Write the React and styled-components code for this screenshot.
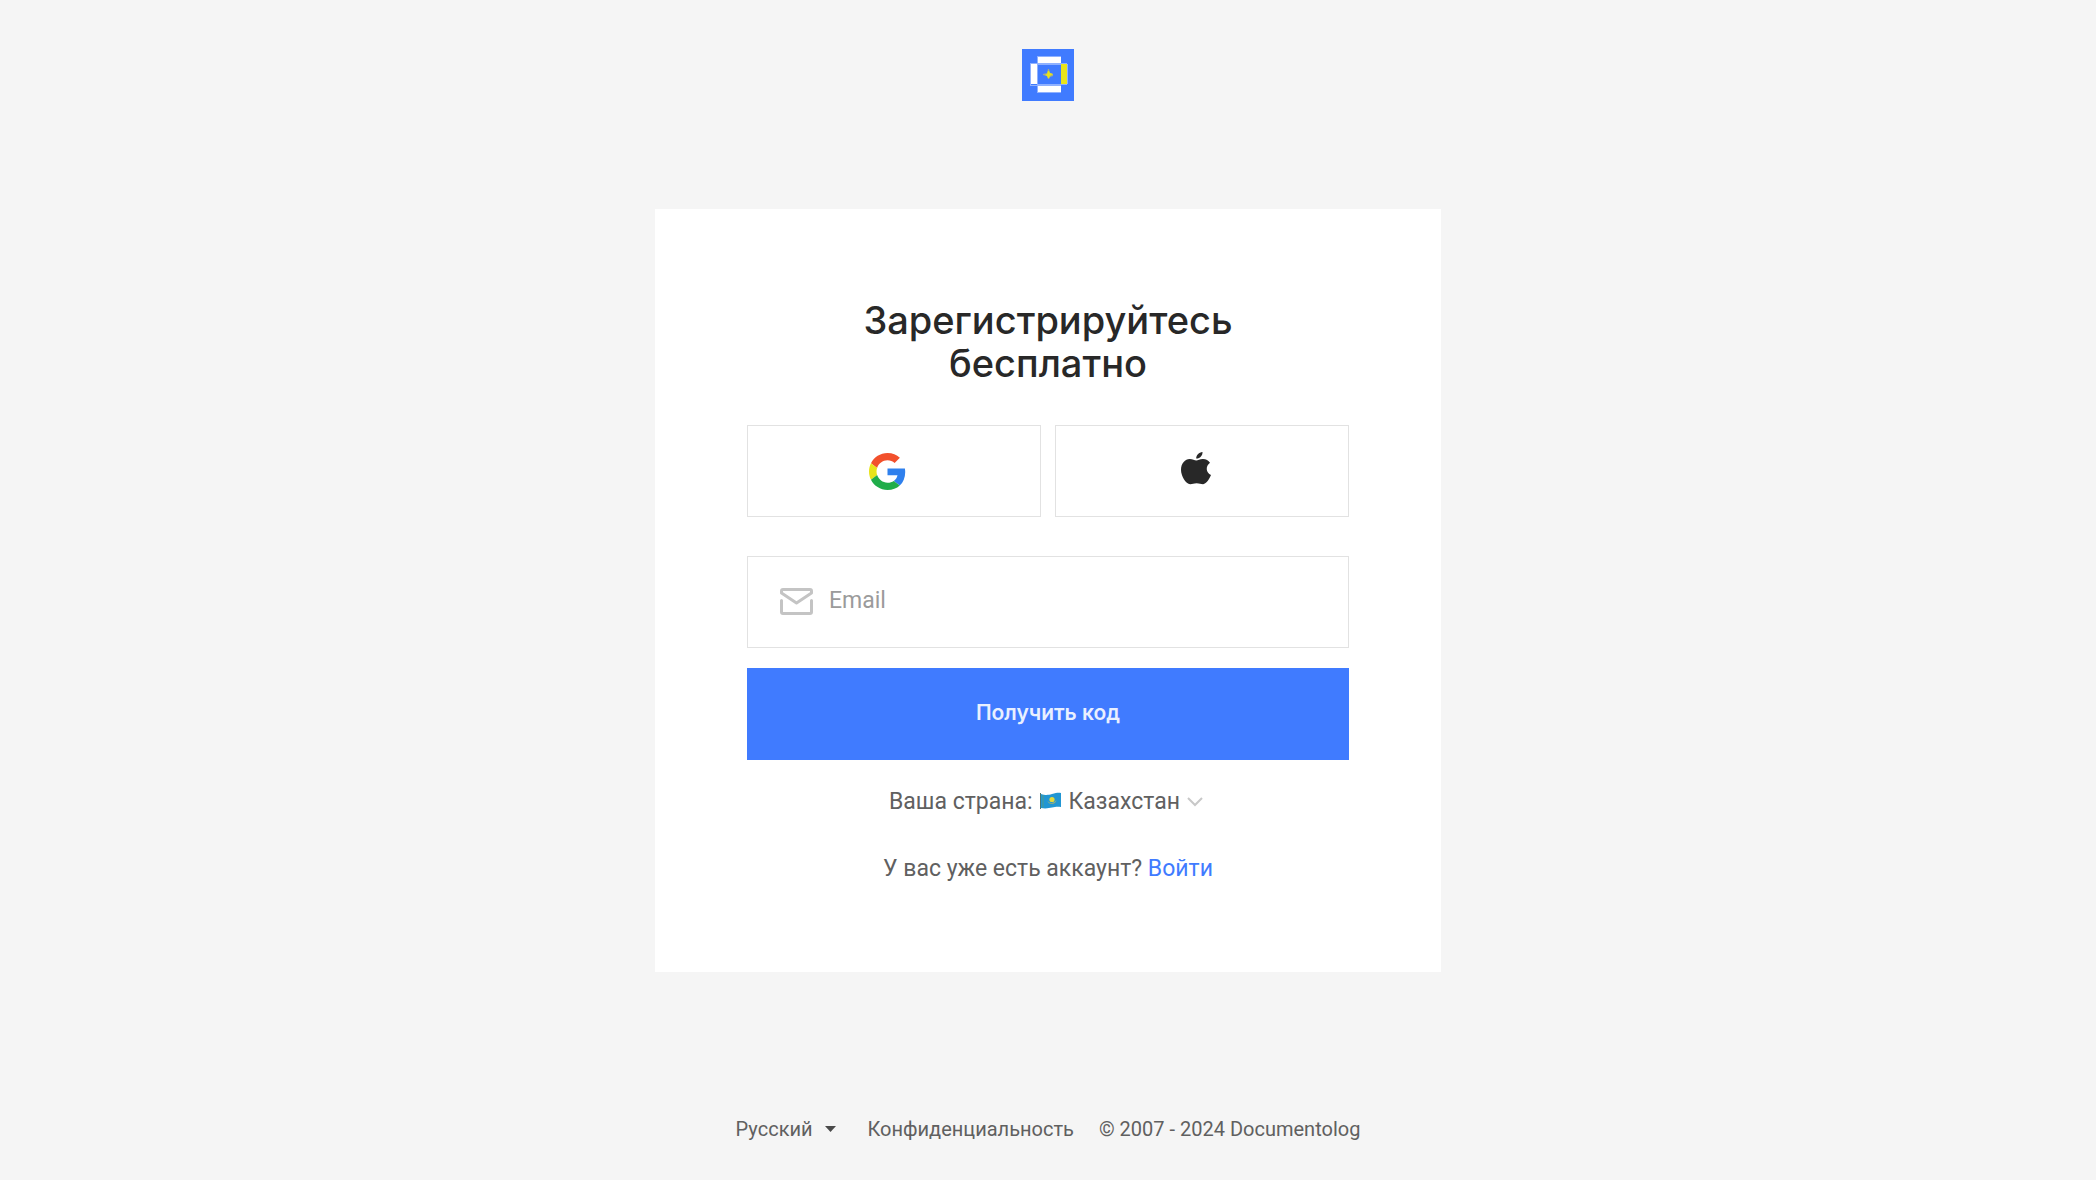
import styled, { createGlobalStyle } from 'styled-components'

const GlobalStyle = createGlobalStyle`
  *, *::before, *::after {
    box-sizing: border-box;
  }

  body {
    margin: 0;
    background-color: #f5f5f5;
    color: #606060;
    font-family: Roboto, 'Noto Sans', sans-serif;
  }
`

const Page = styled.div`
  display: flex;
  flex-direction: column;
  align-items: center;
  min-height: 100vh;
`

const Header = styled.header`
  display: flex;
  padding: 49px 0 108px;
`

const LogoLink = styled.a`
  display: block;
  line-height: 0;
`

const Card = styled.main`
  width: 100%;
  max-width: 786px;
  padding: 90px 92px 88px;
  background-color: #fff;
`

const Title = styled.h1`
  max-width: 420px;
  margin: 0 auto 40px;
  color: #282828;
  font-family: Inter, 'Noto Sans', sans-serif;
  font-size: 38px;
  font-weight: 500;
  line-height: 43px;
  text-align: center;
`

const Socials = styled.div`
  display: grid;
  grid-template-columns: 1fr 1fr;
  gap: 14px;
  margin-bottom: 39px;
`

const SocialButton = styled.button`
  display: flex;
  align-items: center;
  justify-content: center;
  height: 92px;
  padding: 0 13px 0 0;
  border: 1px solid #e2e2e2;
  background-color: #fff;
  cursor: pointer;
`

const Form = styled.form`
  display: flex;
  flex-direction: column;
  gap: 20px;
`

const Field = styled.label`
  display: flex;
  align-items: center;
  gap: 16px;
  height: 92px;
  padding: 0 32px 2px;
  border: 1px solid #e2e2e2;
`

const EmailInput = styled.input`
  flex: 1;
  min-width: 0;
  padding: 0;
  border: 0;
  outline: 0;
  background: transparent;
  color: #282828;
  font-family: inherit;
  font-size: 23px;
  line-height: 30px;

  &::placeholder {
    color: #9b9b9b;
    opacity: 1;
  }
`

const SubmitButton = styled.button`
  height: 92px;
  padding: 0 0 3px;
  border: 0;
  background-color: #407bff;
  color: #e9f0ff;
  font-family: Inter, 'Noto Sans', sans-serif;
  font-size: 21px;
  font-weight: 600;
  cursor: pointer;
`

const Country = styled.div`
  display: flex;
  align-items: center;
  justify-content: center;
  gap: 7px;
  margin-top: 27px;
  padding-right: 4px;
  font-size: 23px;
  line-height: 30px;
`

const Select = styled.select`
  appearance: none;
  field-sizing: content;
  padding: 0;
  border: 0;
  background: transparent;
  color: inherit;
  font: inherit;
  cursor: pointer;
`

const Login = styled.p`
  margin: 37px 0 0;
  font-size: 23px;
  line-height: 30px;
  text-align: center;
`

const LoginLink = styled.a`
  color: #407bff;
  text-decoration: none;
`

const Footer = styled.footer`
  display: flex;
  align-items: center;
  gap: 25px;
  margin-top: auto;
  padding: 40px 0 38px;
  font-size: 20px;
  line-height: 26px;
`

const Language = styled.div`
  display: flex;
  align-items: center;
  gap: 12px;
  padding-right: 7px;
`

const FooterLink = styled.a`
  color: inherit;
  text-decoration: none;
`

const Logo = () => (
  <svg width="52" height="52" viewBox="0 0 52 52" aria-hidden="true">
    <path fill="#407bff" d="M0 0h52v52H0z" />
    <path fill="#8fb1ff" d="M15 7h24v1H15zM8 14h7v1H8zM8 36h7v1H8zM8 14h1v23H8zM15 7h1v37h-1zM15 14h24v2H15zM15 35h24v2H15zM39 14h6v1h-6zM39 35h6v1h-6zM45 15h1v20h-1zM15 43h24v1H15z" />
    <path fill="#fff" d="M16 8h23v6H16zM9 15h6v20H9zM16 37h23v6H16z" />
    <path fill="#e8e31a" d="M39 15h6v20h-6z" />
    <path fill="#a3ae86" d="M26 20h1l1 4 3 1v2l-3 1-1 2h-1l-1-3-4-1v-1l4-1z" />
    <path fill="#e8e31a" d="M26 22h1l1 2 3 1-3 2-1 2h-1l-1-2-2-1 2-1z" />
  </svg>
)

const GoogleIcon = () => (
  <svg width="37" height="37" viewBox="0 0 48 48" aria-hidden="true">
    <path fill="#f2502c" d="M24 9.5c3.54 0 6.71 1.22 9.21 3.6l6.85-6.85C35.9 2.38 30.47 0 24 0 14.62 0 6.51 5.38 2.56 13.22l7.98 6.19C12.43 13.72 17.74 9.5 24 9.5z" />
    <path fill="#2f80ed" d="M46.98 24.55c0-1.57-.15-3.09-.38-4.55H24v9.02h12.94c-.58 2.96-2.26 5.48-4.78 7.18l7.73 6c4.51-4.18 7.09-10.36 7.09-17.65z" />
    <path fill="#e8e31a" d="M10.53 28.59c-.48-1.45-.76-2.99-.76-4.59s.27-3.14.76-4.59l-7.98-6.19C.92 16.46 0 20.12 0 24c0 3.88.92 7.54 2.56 10.78l7.97-6.19z" />
    <path fill="#20ad4a" d="M24 48c6.48 0 11.93-2.13 15.89-5.81l-7.73-6c-2.15 1.45-4.92 2.3-8.16 2.3-6.26 0-11.57-4.22-13.47-9.91l-7.98 6.19C6.51 42.62 14.62 48 24 48z" />
  </svg>
)

const AppleIcon = () => (
  <svg width="30" height="40" viewBox="0 0 30 40" aria-hidden="true">
    <path fill="#282828" d="M21.500 1c.3 3.600-2.800 6.800-6.300 6.600C15 4.300 18 1.200 21.500 1z" />
    <path fill="#282828" d="M15.300 9.500c1.600 0 3.700-1.700 6.700-1.600 3 .1 5.500 1.500 7 3.800-4.700 3.400-4.200 9.700 1 12.400-1.300 3.200-4.400 9-7.900 9.100-2.500 0-3.500-1-6.500-1s-4 .9-6.400 1C4.700 33.200 0 25 0 18.800 0 12 4.300 8 8.600 7.900c2.800-.1 5 1.600 6.700 1.600z" />
  </svg>
)

const MailIcon = () => (
  <svg width="33" height="27" viewBox="0 0 33 27" fill="none" stroke="#c4c4c4" strokeWidth="3" strokeLinejoin="round" strokeLinecap="round" aria-hidden="true">
    <path d="M1.500 5V3Q1.500 1.500 3 1.500h27q1.500 0 1.500 1.500v2L16.500 15z" />
    <path d="M1.500 12.500v11.500q0 1.500 1.500 1.500h27q1.500 0 1.500-1.500V12.500" />
  </svg>
)

const FlagIcon = () => (
  <svg width="22" height="20" viewBox="0 0 22 20" aria-hidden="true">
    <path fill="#2196d3" d="M1 2c5 1.500 7 1 11 0s6-1.500 9-1v14c-4-.5-6 0-9 .5S6 17 1 16z" />
    <path fill="#4b7773" d="M0 1h1v16H0z" />
    <path fill="#4f9b8c" d="M2.500 3h1v12.500h-1z" />
    <path fill="#8caf83" d="M7.500 9q4.500 4.500 9-1-1 4-4.500 4t-4.500-3z" />
    <circle cx="12" cy="7.500" r="2.600" fill="#e3d93c" />
  </svg>
)

const ChevronIcon = () => (
  <svg width="16" height="10" viewBox="0 0 16 10" fill="none" stroke="#c8c8c8" strokeWidth="2" aria-hidden="true">
    <path d="M1 1l7 7 7-7" />
  </svg>
)

const CaretIcon = () => (
  <svg width="11" height="6" viewBox="0 0 11 6" aria-hidden="true">
    <path fill="#4a4a4a" d="M0 0h11L5.500 6z" />
  </svg>
)

const App = () => (
  <>
    <GlobalStyle />
    <Page>
      <Header>
        <LogoLink href="#" aria-label="Documentolog">
          <Logo />
        </LogoLink>
      </Header>
      <Card>
        <Title>Зарегистрируйтесь бесплатно</Title>
        <Socials>
          <SocialButton type="button" aria-label="Google">
            <GoogleIcon />
          </SocialButton>
          <SocialButton type="button" aria-label="Apple">
            <AppleIcon />
          </SocialButton>
        </Socials>
        <Form onSubmit={(e) => e.preventDefault()}>
          <Field>
            <MailIcon />
            <EmailInput type="email" placeholder="Email" aria-label="Email" />
          </Field>
          <SubmitButton type="submit">Получить код</SubmitButton>
        </Form>
        <Country>
          <label htmlFor="country">Ваша страна:</label>
          <FlagIcon />
          <Select id="country">
            <option>Казахстан</option>
          </Select>
          <ChevronIcon />
        </Country>
        <Login>
          У вас уже есть аккаунт? <LoginLink href="#">Войти</LoginLink>
        </Login>
      </Card>
      <Footer>
        <Language>
          <Select aria-label="Язык">
            <option>Русский</option>
          </Select>
          <CaretIcon />
        </Language>
        <FooterLink href="#">Конфиденциальность</FooterLink>
        <span>© 2007 - 2024 Documentolog</span>
      </Footer>
    </Page>
  </>
)

export default App
